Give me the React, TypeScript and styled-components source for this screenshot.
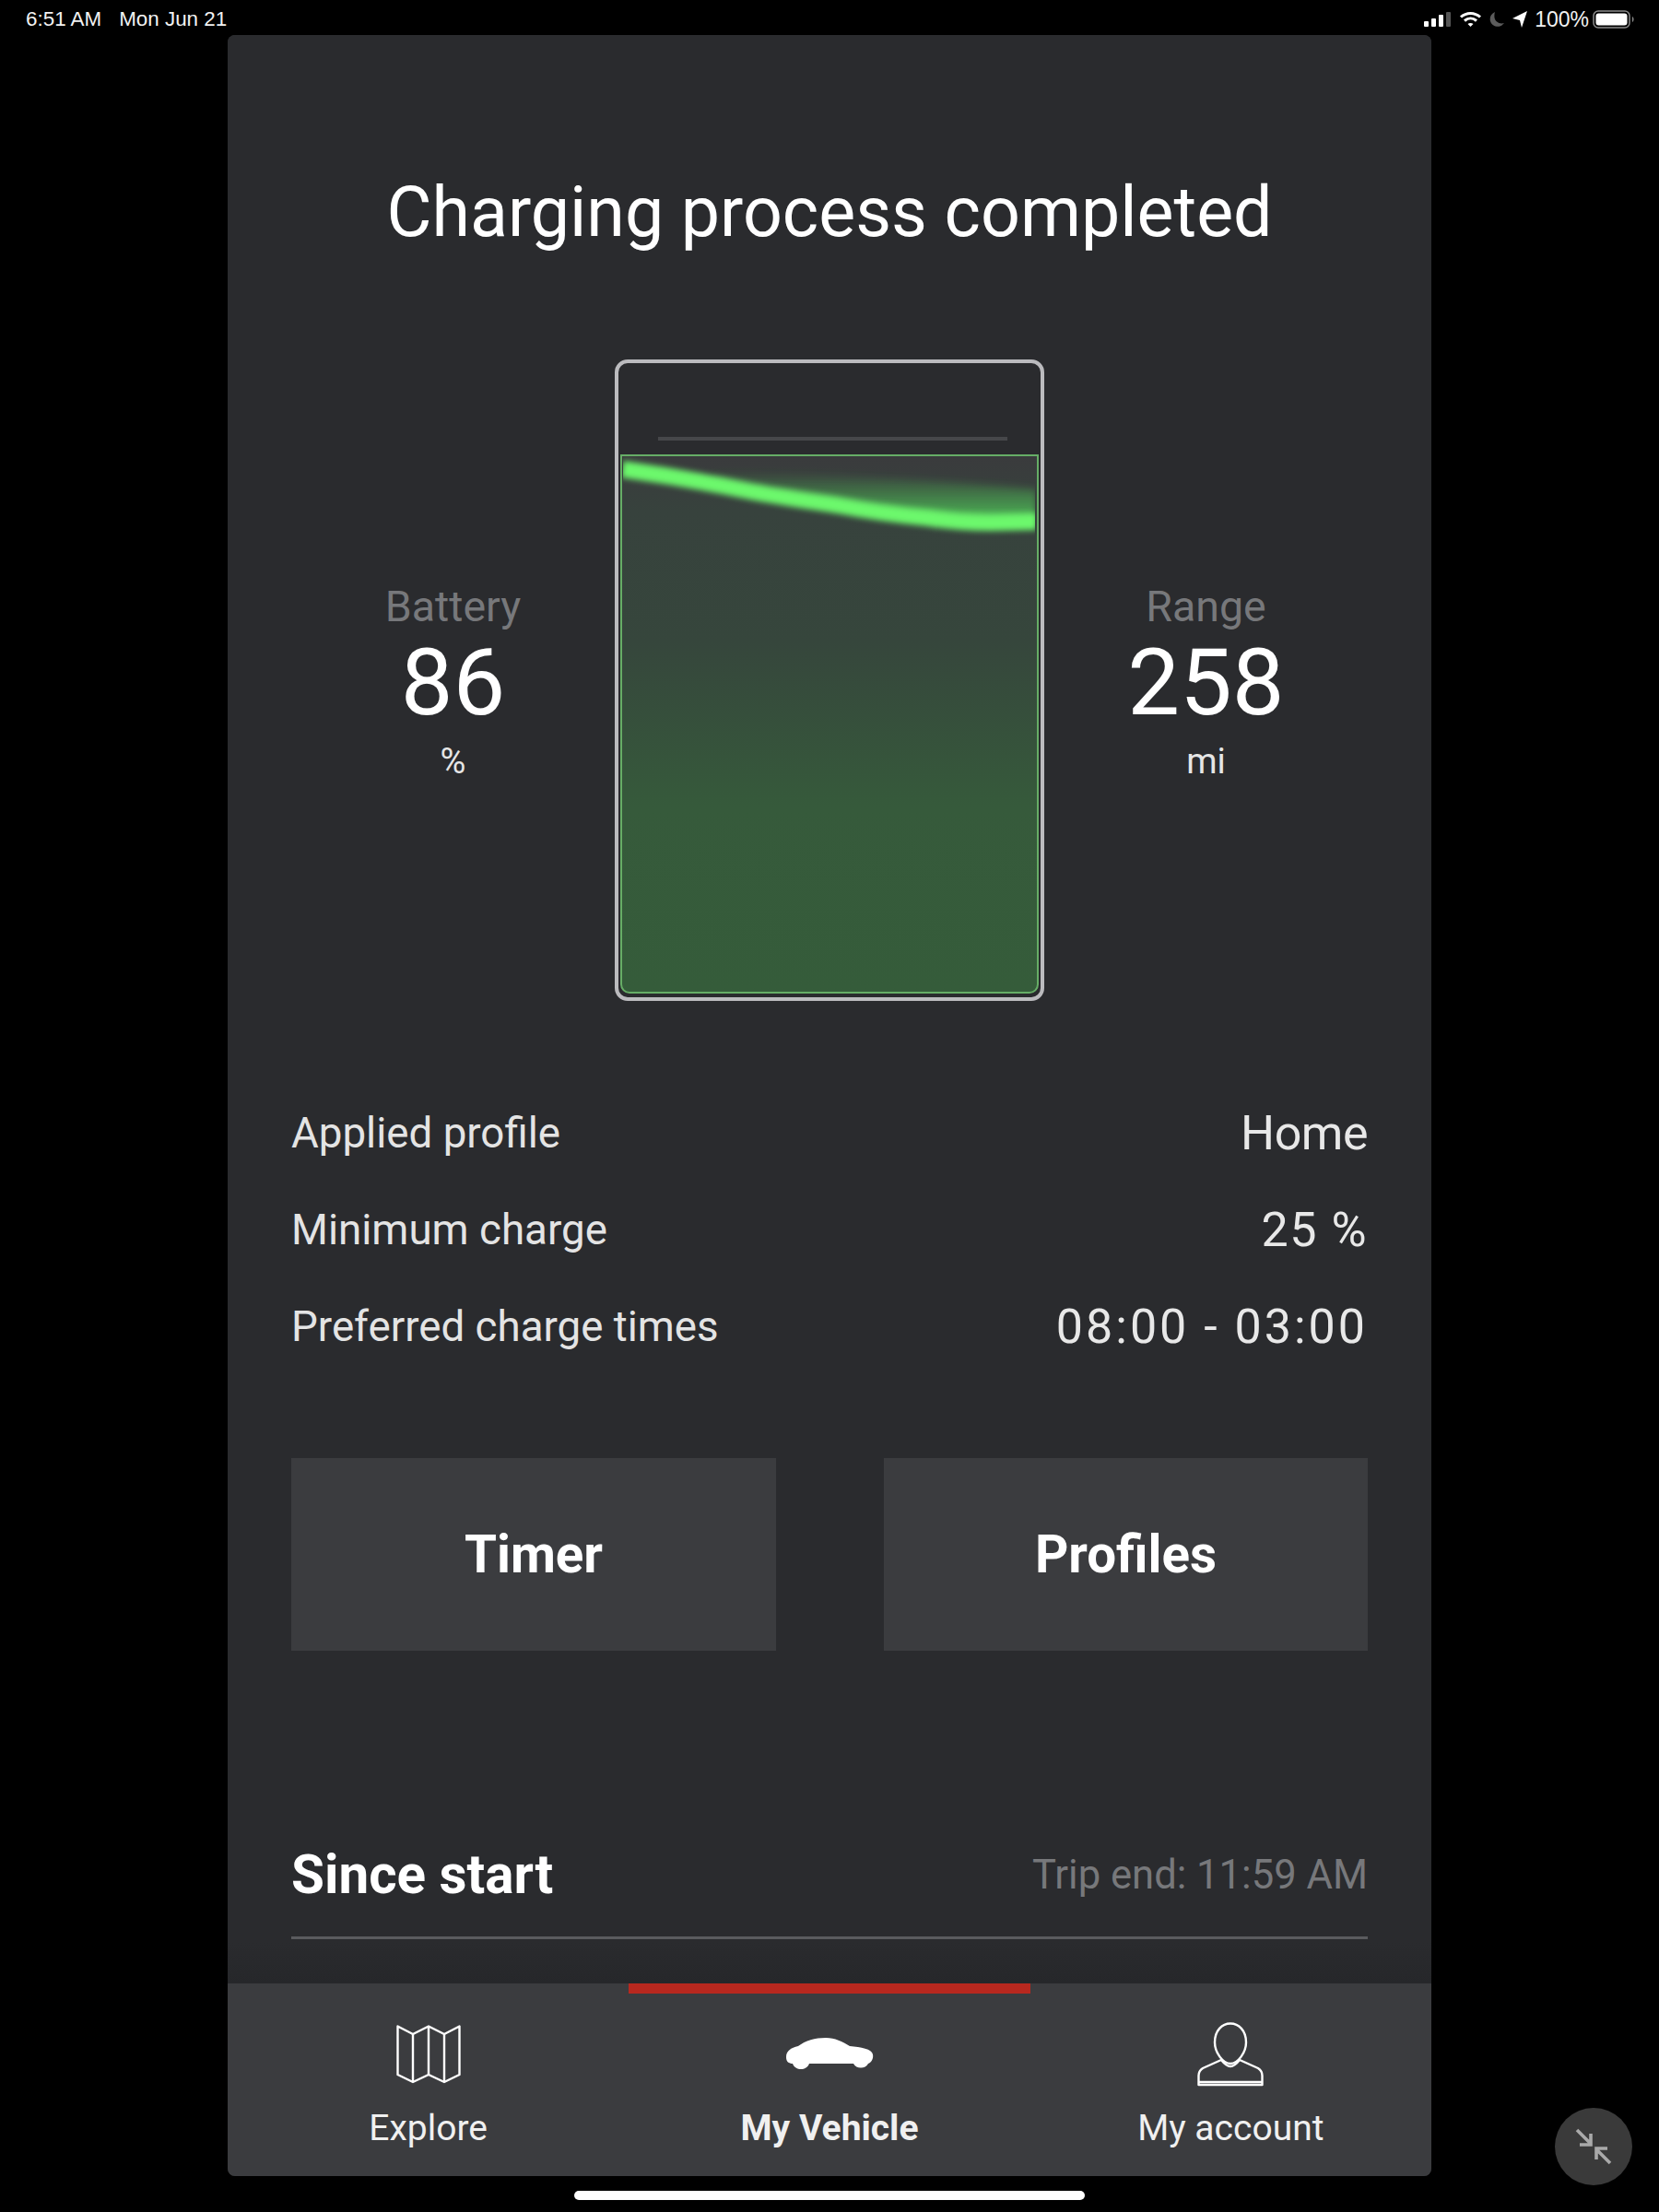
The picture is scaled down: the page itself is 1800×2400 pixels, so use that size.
import styled, { createGlobalStyle } from "styled-components";

const GlobalStyle = createGlobalStyle`
  html, body {
    margin: 0;
    padding: 0;
    background: #000;
  }
  body {
    font-family: Roboto, "Liberation Sans", sans-serif;
    color: #fff;
  }
`;

const chargeRows = [
  { label: "Applied profile", value: "Home", tracking: -0.5 },
  { label: "Minimum charge", value: "25 %", tracking: 1.5 },
  { label: "Preferred charge times", value: "08:00 - 03:00", tracking: 3 },
];

const App = () => {
  return (
    <Screen>
      <GlobalStyle />
      <StatusBar>
        <StatusLeft>
          <span>6:51 AM</span>
          <span>Mon Jun 21</span>
        </StatusLeft>
        <StatusRight>
          <svg width="30" height="16" viewBox="0 0 30 16">
            <rect x="0" y="10" width="5" height="6" rx="1" fill="#fff" />
            <rect x="8" y="7" width="5" height="9" rx="1" fill="#fff" />
            <rect x="16" y="3" width="5" height="13" rx="1" fill="#fff" />
            <rect x="24" y="0" width="5" height="16" rx="1" fill="#555" />
          </svg>
          <svg width="25" height="18" viewBox="0 0 25 18" fill="none" stroke="#fff" strokeWidth="3">
            <path d="M2 6.5 C8 1 17 1 23 6.5" />
            <path d="M6 10.5 C10 7 15 7 19 10.5" />
            <path d="M12.5 17 L9.5 14 C11 12.6 14 12.6 15.5 14 Z" fill="#fff" stroke="none" />
          </svg>
          <svg width="17" height="18" viewBox="0 0 17 18">
            <path d="M6 1 C1.5 3 0 7 1 11 C2.5 16 9 18.5 13.5 15.5 L16 13 C11 14.5 6 11.5 5.5 7 C5.2 4.5 5.5 2.5 6 1 Z" fill="#5c5c5c" />
          </svg>
          <svg width="16" height="18" viewBox="0 0 16 18">
            <path d="M0 8 L16 0 L10 18 L8 10 Z" fill="#fff" />
          </svg>
          <BatteryPercent>100%</BatteryPercent>
          <svg width="46" height="20" viewBox="0 0 46 20">
            <rect x="1" y="1" width="39" height="18" rx="5" fill="none" stroke="#8a8a8a" strokeWidth="1.5" />
            <rect x="3.5" y="3.5" width="34" height="13" rx="3" fill="#fff" />
            <path d="M43 7 C45 8 45 12 43 13 Z" fill="#8a8a8a" />
          </svg>
        </StatusRight>
      </StatusBar>

      <Panel>
        <Content>
          <Title>Charging process completed</Title>

          <Hero>
            <Stat>
              <StatLabel>Battery</StatLabel>
              <StatValue>86</StatValue>
              <StatUnit>%</StatUnit>
            </Stat>
            <BatteryShell>
              <LimitLine />
              <BatteryFill>
                <Wave viewBox="0 0 450 150" preserveAspectRatio="none">
                  <defs>
                    <linearGradient id="glowFade" x1="0" y1="0" x2="0" y2="1">
                      <stop offset="0" stopColor="#4fc057" stopOpacity="0" />
                      <stop offset="1" stopColor="#4fc057" stopOpacity="0.95" />
                    </linearGradient>
                    <filter id="soft" x="-10%" y="-50%" width="120%" height="200%">
                      <feGaussianBlur stdDeviation="3" />
                    </filter>
                    <filter id="glow" x="-10%" y="-80%" width="120%" height="260%">
                      <feGaussianBlur stdDeviation="4" />
                    </filter>
                    <clipPath id="waveClip">
                      <rect x="1" y="0" width="447" height="150" />
                    </clipPath>
                  </defs>
                  <g clipPath="url(#waveClip)">
                    <path
                      d="M100 16 C200 18 320 24 450 36 L450 72 C370 72 300 64 230 50 C190 42 150 34 100 26 Z"
                      fill="url(#glowFade)"
                      filter="url(#glow)"
                    />
                    <path
                      d="M0 14 C50 21 95 29 134 37 C170 44 200 48 233 53 C270 60 300 64 333 67 C360 71 385 72 400 72 L450 71"
                      fill="none"
                      stroke="#6cf86c"
                      strokeWidth="18"
                      filter="url(#soft)"
                    />
                  </g>
                </Wave>
              </BatteryFill>
            </BatteryShell>
            <Stat>
              <StatLabel>Range</StatLabel>
              <StatValue>258</StatValue>
              <StatUnit>mi</StatUnit>
            </Stat>
          </Hero>

          <Details>
            {chargeRows.map((row) => (
              <DetailRow key={row.label}>
                <DetailLabel>{row.label}</DetailLabel>
                <DetailValue $tracking={row.tracking}>{row.value}</DetailValue>
              </DetailRow>
            ))}
          </Details>

          <Actions>
            <ActionButton>Timer</ActionButton>
            <ActionButton>Profiles</ActionButton>
          </Actions>

          <SinceHeader>
            <SinceTitle>Since start</SinceTitle>
            <TripEnd>Trip end: 11:59 AM</TripEnd>
          </SinceHeader>
        </Content>

        <TabBar>
          <Tab>
            <TabIcon>
              <svg width="70" height="64" viewBox="0 0 70 64" fill="none" stroke="#fff" strokeWidth="2.4" strokeLinejoin="round">
                <path d="M1.5 1.5 L18 10 L35 1.5 L52 10 L68.5 1.5 L68.5 54 L52 62 L35 54 L18 62 L1.5 54 Z" />
                <path d="M18 10 L18 62 M35 1.5 L35 54 M52 10 L52 62" />
              </svg>
            </TabIcon>
            <TabLabel>Explore</TabLabel>
          </Tab>
          <Tab $active>
            <TabIcon>
              <svg width="96" height="38" viewBox="0 0 96 38">
                <path
                  d="M1 22 C1 15 6 12 14 10 C22 4 32 1 44 1 C54 1 62 5 70 10 C82 11 94 13 95 19 C96 24 93 28 90 29 C87 35 77 35 74 29 L26 29 C23 37 11 37 8 29 C4 29 1 27 1 22 Z"
                  fill="#fff"
                />
              </svg>
            </TabIcon>
            <TabLabel $active>My Vehicle</TabLabel>
          </Tab>
          <Tab>
            <TabIcon>
              <svg width="72" height="70" viewBox="0 0 72 70" fill="none" stroke="#fff" strokeWidth="2.4" strokeLinejoin="round">
                <path d="M36 1.5 C45 1.5 53 9 53 22 C53 33 44 45 36 45 C28 45 19 33 19 22 C19 9 27 1.5 36 1.5 Z" />
                <path d="M26 41 L6 50 C3 52 1.5 55 1.5 58 L1.5 68 L70.5 68 L70.5 58 C70.5 55 69 52 66 50 L46 41 C42 46 39 48 36 48 C33 48 30 46 26 41 Z" />
                <path d="M1.5 65 L70.5 65" />
              </svg>
            </TabIcon>
            <TabLabel>My account</TabLabel>
          </Tab>
        </TabBar>
      </Panel>

      <HomeIndicator />
      <FloatingButton>
        <svg width="40" height="40" viewBox="0 0 40 40" fill="none" stroke="#a9a9a9" strokeWidth="3.6">
          <path d="M2 2 L17 17 M17 6 L17 18 L5 18" />
          <path d="M38 38 L23 23 M23 34 L23 22 L35 22" />
        </svg>
      </FloatingButton>
    </Screen>
  );
};

const Screen = styled.div`
  position: relative;
  width: 1800px;
  height: 2400px;
  background: #000;
  overflow: hidden;
`;

const StatusBar = styled.div`
  height: 38px;
  display: flex;
  justify-content: space-between;
  align-items: center;
  padding: 4px 26px 0 28px;
  box-sizing: border-box;
  font-family: "Liberation Sans", sans-serif;
  font-size: 22.4px;
  color: #f2f2f2;
`;

const StatusLeft = styled.div`
  display: flex;
  gap: 19px;
`;

const StatusRight = styled.div`
  display: flex;
  align-items: center;
  gap: 8px;
`;

const BatteryPercent = styled.span`
  margin-right: -4px;
  font-size: 23px;
`;

const Panel = styled.div`
  width: 1306px;
  height: 2323px;
  margin: 0 auto;
  display: flex;
  flex-direction: column;
  background: #2a2b2e;
  border-radius: 8px;
  overflow: hidden;
`;

const Content = styled.div`
  flex: 1;
  padding: 0 69px;
  display: flex;
  flex-direction: column;
  background: linear-gradient(to bottom, #2a2b2e 0, #2a2b2e 2070px, #26272a 2114px);
`;

const Title = styled.h1`
  margin: 146px 0 0;
  height: 92px;
  line-height: 92px;
  font-size: 75.3px;
  font-weight: 400;
  text-align: center;
  color: #fff;
`;

const Hero = styled.div`
  margin-top: 114px;
  display: grid;
  grid-template-columns: 1fr 466px 1fr;
  align-items: center;
`;

const Stat = styled.div`
  padding-top: 6px;
  display: flex;
  flex-direction: column;
  align-items: center;
`;

const StatLabel = styled.div`
  font-size: 46.5px;
  line-height: 54px;
  color: #77787b;
`;

const StatValue = styled.div`
  font-size: 101px;
  line-height: 112px;
  color: #fff;
`;

const StatUnit = styled.div`
  margin-top: 4px;
  font-size: 38px;
  line-height: 50px;
  color: #e6e6e6;
`;

const BatteryShell = styled.div`
  height: 696px;
  box-sizing: border-box;
  border: 4px solid #bbbbbe;
  border-radius: 14px;
  padding: 0 2px 4px;
  display: flex;
  flex-direction: column;
`;

const LimitLine = styled.div`
  height: 4px;
  margin: 80px 34px 15px 41px;
  background: #46474a;
`;

const BatteryFill = styled.div`
  position: relative;
  flex: 1;
  box-sizing: border-box;
  border: 2px solid #66ad66;
  border-radius: 0 0 10px 10px;
  background: linear-gradient(to bottom, #3a3b3d 0, #37423d 60px, #36463c 200px, #365a3b 380px, #355c3a 100%);
`;

const Wave = styled.svg`
  position: absolute;
  top: 0;
  left: 0;
  width: 100%;
  height: 150px;
`;

const Details = styled.div`
  margin-top: 113px;
  display: flex;
  flex-direction: column;
  gap: 45px;
`;

const DetailRow = styled.div`
  display: flex;
  justify-content: space-between;
  align-items: center;
  height: 60px;
`;

const DetailLabel = styled.div`
  font-size: 45.7px;
  color: #e4e4e4;
`;

const DetailValue = styled.div<{ $tracking: number }>`
  font-size: 52px;
  letter-spacing: ${(p) => p.$tracking}px;
  color: #e8e8e8;
`;

const Actions = styled.div`
  margin-top: 113px;
  display: grid;
  grid-template-columns: 526px 525px;
  justify-content: space-between;
`;

const ActionButton = styled.button`
  height: 209px;
  border: none;
  background: #3b3c3f;
  color: #fff;
  font-family: inherit;
  font-size: 56.5px;
  font-weight: 700;
`;

const SinceHeader = styled.div`
  margin-top: 211px;
  padding-bottom: 35px;
  display: flex;
  justify-content: space-between;
  align-items: center;
  border-bottom: 3px solid #5a5b5e;
`;

const SinceTitle = styled.div`
  font-size: 58.4px;
  line-height: 64px;
  font-weight: 700;
  color: #fff;
`;

const TripEnd = styled.div`
  font-size: 43.6px;
  color: #77787b;
`;

const TabBar = styled.div`
  height: 209px;
  display: grid;
  grid-template-columns: repeat(3, 1fr);
  background: #3b3c3f;
`;

const Tab = styled.div<{ $active?: boolean }>`
  display: flex;
  flex-direction: column;
  align-items: center;
  border-top: 11px solid ${(p) => (p.$active ? "#b8281f" : "transparent")};
`;

const TabIcon = styled.div`
  height: 72px;
  margin-top: 30px;
  display: flex;
  align-items: center;
  justify-content: center;
`;

const TabLabel = styled.div<{ $active?: boolean }>`
  margin-top: 19px;
  font-size: 39px;
  line-height: 50px;
  font-weight: ${(p) => (p.$active ? 700 : 400)};
  color: #f0f0f0;
`;

const HomeIndicator = styled.div`
  width: 554px;
  height: 10px;
  margin: 16px auto 0;
  border-radius: 5px;
  background: #fff;
`;

const FloatingButton = styled.div`
  position: absolute;
  left: 1687px;
  top: 2287px;
  width: 84px;
  height: 84px;
  border-radius: 50%;
  background: #3a3a3a;
  display: flex;
  align-items: center;
  justify-content: center;
`;

export default App;
